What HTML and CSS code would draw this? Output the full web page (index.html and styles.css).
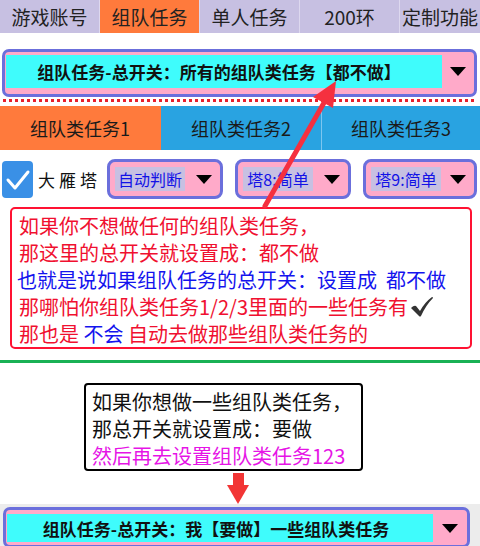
FILE: index.html
```html
<!DOCTYPE html>
<html lang="zh-CN">
  <head>
    <meta charset="UTF-8">
    <meta name="viewport" content="width=device-width, initial-scale=1.0">
    <title>组队任务 - 总开关说明</title>
    <link rel="stylesheet" href="styles.css">
  </head>
  <body>
    <div class="tabs">
      <div class="tab">游戏账号</div>
      <div class="tab active">组队任务</div>
      <div class="tab">单人任务</div>
      <div class="tab">200环</div>
      <div class="tab">定制功能</div>
    </div>

    <div class="switch">
      <div class="switch-value">组队任务-总开关：所有的组队类任务【都不做】</div>
      <div class="caret-box"><span class="caret"></span></div>
    </div>
    <div class="dots"></div>

    <div class="subtabs">
      <div class="subtab active">组队类任务1</div>
      <div class="subtab">组队类任务2</div>
      <div class="subtab">组队类任务3</div>
    </div>

    <div class="options">
      <div class="checkbox">
        <svg width="31" height="37" viewBox="0 0 31 37">
          <polyline points="6,19 13,27 26,11" fill="none" stroke="#fff" stroke-width="3" stroke-linecap="round" stroke-linejoin="round"/>
        </svg>
      </div>
      <div class="option-label">大雁塔</div>
      <div class="dropdown">
        <span class="dropdown-value">自动判断</span>
        <span class="caret"></span>
      </div>
      <div class="dropdown">
        <span class="dropdown-value">塔8:简单</span>
        <span class="caret"></span>
      </div>
      <div class="dropdown">
        <span class="dropdown-value">塔9:简单</span>
        <span class="caret"></span>
      </div>
    </div>

    <div class="note">
      <div class="red">如果你不想做任何的组队类任务，</div>
      <div class="red">那这里的总开关就设置成：都不做</div>
      <div class="blue shift">也就是说如果组队任务的总开关：设置成&nbsp;&nbsp;都不做</div>
      <div class="red">那哪怕你组队类任务1/2/3里面的一些任务有<svg class="tick" width="24" height="22" viewBox="0 0 24 22"><path d="M1,12 Q4,9 6,10 L10,15 Q15,6 22,1 Q23,1 23,2 Q16,9 11,20 Q10,21 9,20 Z" fill="#333"/></svg></div>
      <div class="red">那也是 <span class="blue">不会</span> 自动去做那些组队类任务的</div>
    </div>

    <div class="divider"></div>

    <div class="hint">
      <div>如果你想做一些组队类任务，</div>
      <div>那总开关就设置成：要做</div>
      <div class="magenta">然后再去设置组队类任务123</div>
    </div>

    <svg class="down-arrow" width="22" height="31" viewBox="0 0 22 31">
      <rect x="6" y="0" width="11" height="12" fill="#f23535"/>
      <polygon points="0,12 22,12 11,31" fill="#f23535"/>
    </svg>

    <div class="bottom-wrap">
      <div class="switch switch-small">
        <div class="switch-value">组队任务-总开关：我【要做】一些组队类任务</div>
        <div class="caret-box"><span class="caret"></span></div>
      </div>
    </div>

    <!-- pointer from the note up to the main switch -->
    <svg class="pointer" width="480" height="546" viewBox="0 0 480 546">
      <line x1="265" y1="206" x2="325" y2="101" stroke="#f5303f" stroke-width="5" stroke-linecap="round"/>
      <polygon points="336,81 333,108 313,97" fill="#f5303f"/>
    </svg>
  </body>
</html>
```

FILE: styles.css
```css
body {
  margin: 0;
  width: 480px;
  position: relative;
  font-family: "Noto Sans CJK SC", "Noto Sans", sans-serif;
  color: #1a1a1a;
  background: #fff;
}

/* top tabs */
.tabs {
  display: flex;
  height: 33px;
  background: #c7c0e2;
}

.tab {
  width: 99px;
  border-right: 1px solid #ddd8ef;
  display: flex;
  align-items: center;
  justify-content: center;
  font-size: 19px;
  color: #222;
}

.tab:last-child {
  flex: 1;
  border-right: none;
}

.tab.active {
  background: #ff7a3c;
}

/* switch select */
.switch {
  margin: 16px 3px 0 2px;
  height: 48px;
  box-sizing: border-box;
  border: 3px solid #6b6fdc;
  border-radius: 7px;
  background: #ffaac9;
  padding: 3px 0 6px 1px;
  display: flex;
}

.switch-value {
  width: 436px;
  background: #3ffcfc;
  display: flex;
  align-items: center;
  justify-content: center;
  padding-right: 10px;
  box-sizing: border-box;
  font-size: 17px;
  font-weight: bold;
  color: #111;
}

.caret-box {
  flex: 1;
  display: flex;
  align-items: center;
  justify-content: center;
}

.caret {
  width: 0;
  height: 0;
  border-left: 8px solid transparent;
  border-right: 8px solid transparent;
  border-top: 9px solid #000;
}

.dots {
  margin: 2px 5px 0 3px;
  height: 3px;
  background: repeating-linear-gradient(90deg, #e8202c 0 3px, transparent 3px 6px);
}

/* sub tabs */
.subtabs {
  display: flex;
  margin-top: 4px;
  height: 44px;
  background: #29a3e1;
}

.subtab {
  width: 160px;
  border-right: 1px solid #7dc6ef;
  display: flex;
  align-items: center;
  justify-content: center;
  font-size: 18px;
  color: #1a1a1a;
}

.subtab:last-child {
  flex: 1;
  border-right: none;
}

.subtab.active {
  background: #ff7a3c;
  border-right-color: #ff7a3c;
}

/* option row */
.options {
  display: flex;
  align-items: center;
  margin-top: 9px;
  height: 40px;
}

.checkbox {
  margin-left: 2px;
  width: 31px;
  height: 37px;
  border-radius: 4px;
  background: #3a90e6;
}

.checkbox svg {
  display: block;
}

.option-label {
  width: 74px;
  padding-left: 5px;
  box-sizing: border-box;
  font-size: 17px;
  letter-spacing: 4px;
  white-space: nowrap;
  color: #111;
}

.dropdown {
  width: 116px;
  height: 40px;
  box-sizing: border-box;
  margin-right: 12px;
  border: 3px solid #6b6fdc;
  border-radius: 8px;
  background: #ffaac9;
  padding: 0 8px 0 5px;
  display: flex;
  align-items: center;
  justify-content: space-between;
}

.dropdown:last-child {
  margin-right: 0;
  width: 114px;
}

.dropdown-value {
  width: 70px;
  height: 24px;
  background: #c7c0e2;
  color: #1212e6;
  font-size: 16px;
  line-height: 24px;
  text-align: center;
}

/* red note */
.note {
  margin: 8px 8px 0 10px;
  height: 142px;
  box-sizing: border-box;
  border: 2px solid #ff1232;
  border-radius: 5px;
  padding: 3px 0 0 7px;
  font-size: 20px;
  line-height: 27px;
  white-space: nowrap;
}

.red {
  color: #f01030;
}

.blue {
  color: #1414ee;
}

.shift {
  margin-left: -2px;
}

.tick {
  vertical-align: -3px;
  margin-left: 2px;
}

.divider {
  margin-top: 11px;
  height: 3px;
  background: #19b155;
}

/* black hint */
.hint {
  margin: 20px 0 0 84px;
  width: 279px;
  height: 88px;
  box-sizing: border-box;
  border: 2px solid #000;
  border-radius: 4px;
  padding: 3px 0 0 6px;
  font-size: 20px;
  line-height: 27px;
  color: #111;
  white-space: nowrap;
}

.magenta {
  color: #e614e6;
}

.down-arrow {
  display: block;
  margin: 2px 0 0 227px;
}

.bottom-wrap {
  background: #ececec;
  padding: 3px 10px 2px 0;
}

.switch-small {
  margin: 0 0 0 3px;
  height: 41px;
  padding: 4px 0 3px 1px;
}

.switch-small .switch-value {
  width: 426px;
  padding-right: 8px;
}

.pointer {
  position: absolute;
  left: 0;
  top: 0;
  pointer-events: none;
}
```
